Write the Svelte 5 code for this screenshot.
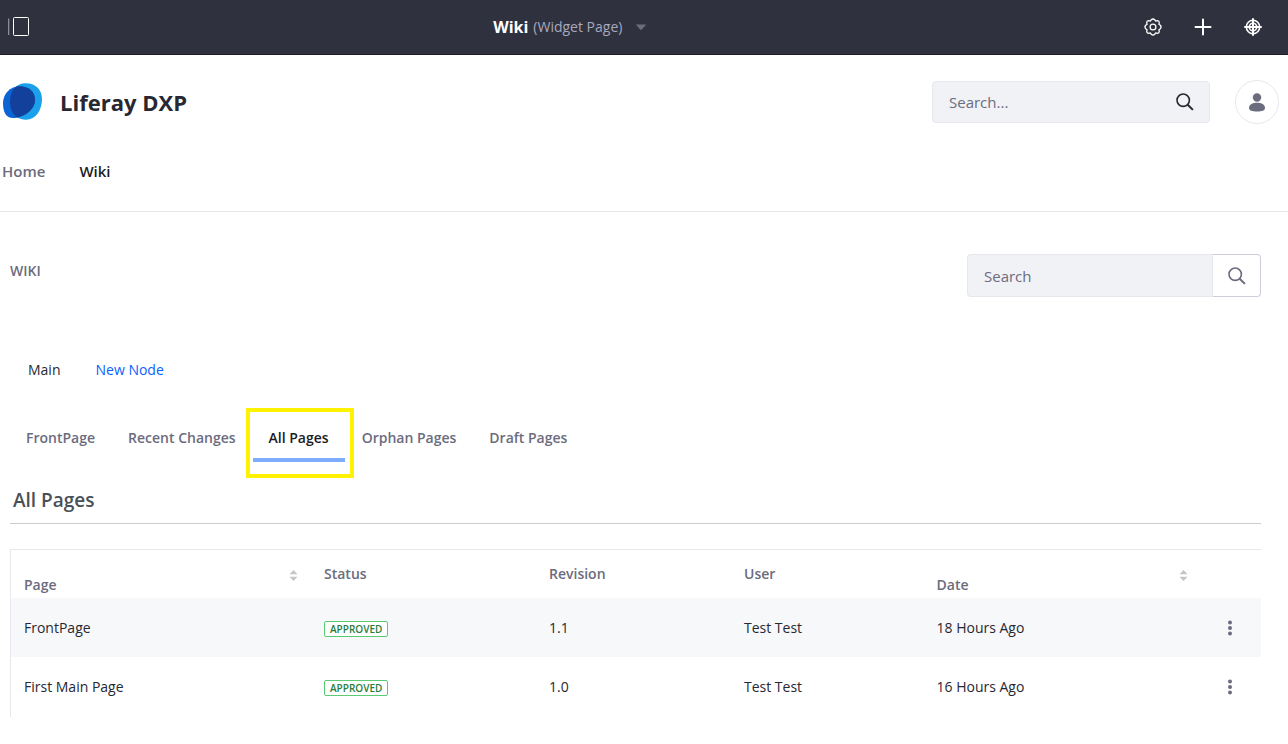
<script>
  const tabs = ['FrontPage', 'Recent Changes', 'All Pages', 'Orphan Pages', 'Draft Pages'];
  const columns = [
    { name: 'Page', sortable: true },
    { name: 'Status' },
    { name: 'Revision' },
    { name: 'User' },
    { name: 'Date', sortable: true }
  ];
  const rows = [
    { page: 'FrontPage', status: 'Approved', revision: '1.1', user: 'Test Test', date: '18 Hours Ago' },
    { page: 'First Main Page', status: 'Approved', revision: '1.0', user: 'Test Test', date: '16 Hours Ago' }
  ];
  let active = $state('All Pages');
</script>

{#snippet magnifier()}
  <svg width="18" height="18" viewBox="0 0 18 18" fill="none" stroke="currentColor" stroke-width="1.6" aria-hidden="true">
    <circle cx="7.2" cy="7.2" r="6.2" />
    <path d="M11.7 11.7L16.9 16.9" stroke-width="2" />
  </svg>
{/snippet}

<header class="control-bar">
  <button class="icon-btn panel-btn" aria-label="Toggle menu">
    <svg width="22" height="20" viewBox="0 0 22 20" fill="none">
      <path d="M0.500 1.5V18" stroke="#8b8c99" stroke-width="1.6" />
      <rect x="5.5" y="0.5" width="15" height="18" rx="1" stroke="#fff" />
    </svg>
  </button>
  <button class="page-title">
    <strong>Wiki</strong>
    <span>(Widget Page)</span>
    <svg width="12" height="7" viewBox="0 0 12 7" aria-hidden="true"><path d="M0.8 0.5h10.4L6.8 5.6q-.8.8-1.6 0z" fill="#6b6c7e" /></svg>
  </button>
  <div class="bar-tools">
    <button class="icon-btn" aria-label="Settings">
      <svg width="18" height="18" viewBox="0 0 18 18" fill="none" stroke="#fff" stroke-width="1.3" stroke-linejoin="round">
        <path d="M7.300 1.700Q9 .2 10.700 1.700L11.700 3.100L13.500 2.700Q15.200 2.800 15.300 4.500L14.900 6.300L16.300 7.300Q17.800 9 16.300 10.700L14.900 11.700L15.300 13.500Q15.200 15.200 13.500 15.300L11.700 14.900L10.700 16.300Q9 17.800 7.300 16.300L6.300 14.900L4.500 15.300Q2.800 15.200 2.700 13.500L3.100 11.700L1.700 10.700Q.2 9 1.700 7.300L3.100 6.300L2.700 4.500Q2.800 2.800 4.500 2.700L6.300 3.100Z" />
        <circle cx="9" cy="9" r="2.9" />
      </svg>
    </button>
    <button class="icon-btn" aria-label="Add">
      <svg width="18" height="18" viewBox="0 0 18 18" stroke="#fff" stroke-width="2" stroke-linecap="round"><path d="M9 1.5V16.500M1.500 9H16.500" /></svg>
    </button>
    <button class="icon-btn" aria-label="Simulation">
      <svg width="18" height="18" viewBox="0 0 18 18" fill="none" stroke="#fff">
        <circle cx="9" cy="9" r="6.7" stroke-width="1.6" />
        <circle cx="9" cy="9" r="3.7" stroke-width="1.6" />
        <path d="M9 1V17M1 9H17" stroke-width="2" stroke-linecap="round" />
      </svg>
    </button>
  </div>
</header>

<div class="banner">
  <div class="brand-row">
    <a class="brand" href="#home">
      <svg width="40" height="38" viewBox="0 0 40 38" aria-hidden="true">
        <defs>
          <clipPath id="front"><path d="M8 19C8 7 15 .5 23 .3C33 0 40 6 40 16C40 27 34 36.500 24 36.700C14 37 8 29 8 19Z" /></clipPath>
        </defs>
        <path d="M8 19C8 7 15 .5 23 .3C33 0 40 6 40 16C40 27 34 36.500 24 36.700C14 37 8 29 8 19Z" fill="#1ba1ec" />
        <path d="M1 20C1 11 8 3.500 17 3.200C26 3 33 8 33 17C33 27 21 35 11 35C4 35 1 29 1 20Z" fill="#0b63d4" />
        <path d="M1 20C1 11 8 3.500 17 3.200C26 3 33 8 33 17C33 27 21 35 11 35C4 35 1 29 1 20Z" fill="#13409a" clip-path="url(#front)" />
      </svg>
      <span>Liferay DXP</span>
    </a>
    <div class="account">
      <form class="site-search" role="search">
        <input type="text" placeholder="Search..." aria-label="Search site" />
        <button type="button" aria-label="Submit site search">{@render magnifier()}</button>
      </form>
      <button class="avatar" aria-label="User profile">
        <svg width="18" height="20" viewBox="0 0 18 20" fill="#6b6c7e">
          <circle cx="9" cy="5.500" r="4.200" />
          <path d="M1 16C1 12.500 4.500 10.800 9 10.800s8 1.700 8 5.200C17 18.500 14 19.500 9 19.500s-8-1-8-3.500z" />
        </svg>
      </button>
    </div>
  </div>
  <nav class="site-nav" aria-label="Site">
    <a href="#home">Home</a>
    <a class="current" href="#wiki" aria-current="page">Wiki</a>
  </nav>
</div>

<main>
  <div class="portlet-head">
    <h2>WIKI</h2>
    <form class="wiki-search" role="search">
      <input type="text" placeholder="Search" aria-label="Search wiki" />
      <button type="button" aria-label="Submit wiki search">{@render magnifier()}</button>
    </form>
  </div>

  <nav class="nodes" aria-label="Nodes">
    <a class="current" href="#main">Main</a>
    <a href="#new-node">New Node</a>
  </nav>

  <div class="tabs" role="tablist">
    {#each tabs as tab}
      <button role="tab" aria-selected={active === tab} class:active={active === tab} onclick={() => (active = tab)}>{tab}</button>
    {/each}
  </div>

  <h1>All Pages</h1>

  <table>
    <colgroup>
      <col class="c-page" /><col class="c-status" /><col class="c-revision" /><col class="c-user" /><col class="c-date" /><col />
    </colgroup>
    <thead>
      <tr>
        {#each columns as column}
          <th scope="col" class:sortable={column.sortable}>
            <div class="th-inner">
              <span>{column.name}</span>
              {#if column.sortable}
                <button class="sort" aria-label="Sort by {column.name}">
                  <svg width="9" height="11" viewBox="0 0 9 11" fill="#c5c5c9"><path d="M4.500 0L8.500 4.300H.5zM.5 6.700h8L4.500 11z" /></svg>
                </button>
              {/if}
            </div>
          </th>
        {/each}
        <td></td>
      </tr>
    </thead>
    <tbody>
      {#each rows as row}
        <tr>
          <td>{row.page}</td>
          <td><span class="label">{row.status}</span></td>
          <td>{row.revision}</td>
          <td>{row.user}</td>
          <td>{row.date}</td>
          <td class="actions">
            <button class="icon-btn" aria-label="Actions for {row.page}">
              <svg width="4" height="16" viewBox="0 0 4 16" fill="#6b6c7e"><circle cx="2" cy="2.500" r="2" /><circle cx="2" cy="8" r="2" /><circle cx="2" cy="13.500" r="2" /></svg>
            </button>
          </td>
        </tr>
      {/each}
    </tbody>
  </table>
</main>

<style>
  :global(body) {
    background: #fff;
    color: #272833;
    font-family: "Open Sans", "Noto Sans", sans-serif;
    font-size: 14px;
    line-height: 20px;
  }
  button, input { font: inherit; color: inherit; }
  button { background: none; border: 0; padding: 0; cursor: pointer; }
  a { color: inherit; text-decoration: none; }
  svg { display: block; }
  .icon-btn { display: grid; place-items: center; }

  .control-bar {
    display: grid;
    grid-template-columns: 15fr auto 19fr;
    align-items: center;
    height: 54px;
    padding: 0 26px 0 8px;
    background: #30313f;
    border-bottom: 1px solid #1c1d29;
  }
  .panel-btn { justify-self: start; }
  .page-title { display: flex; align-items: center; gap: 5px; color: #a7a9bc; }
  .page-title strong { color: #fff; font-size: 16px; }
  .page-title svg { margin-left: 8px; }
  .bar-tools { display: flex; justify-content: flex-end; gap: 32px; }

  .banner { border-bottom: 1px solid #e7e7ed; padding: 25px 9px 30px 2px; }
  .brand-row { display: flex; justify-content: space-between; align-items: center; }
  .brand { display: flex; align-items: center; gap: 18px; font-size: 22px; line-height: 32px; font-weight: 700; }
  .account { display: flex; align-items: center; gap: 25px; }
  .site-search {
    display: flex;
    align-items: center;
    width: 278px;
    height: 42px;
    box-sizing: border-box;
    padding: 0 15px 0 16px;
    background: #f1f2f5;
    border: 1px solid #e7e7ed;
    border-radius: 4px;
  }
  input { flex: 1; min-width: 0; border: 0; padding: 0; background: none; outline: 0; font-size: 15px; }
  input::placeholder { color: #6b6c7e; opacity: 1; }
  .avatar {
    display: grid;
    place-items: center;
    width: 44px;
    height: 44px;
    border: 1px solid #e7e7ed;
    border-radius: 50%;
  }
  .site-nav { display: flex; gap: 34px; margin-top: 37px; font-size: 15px; font-weight: 600; color: #6b6c7e; }
  .site-nav .current { color: #1c1c24; }

  main { padding: 42px 27px 27px 10px; }
  .portlet-head { display: flex; justify-content: space-between; align-items: flex-start; }
  h2 { margin: 7px 0 0; font-size: 14px; font-weight: 600; line-height: 20px; color: #6b6c7e; }
  .wiki-search {
    display: flex;
    width: 294px;
    height: 43px;
  }
  .wiki-search input {
    padding: 0 16px;
    background: #f1f2f5;
    border: 1px solid #e7e7ed;
    border-right: 0;
    border-radius: 4px 0 0 4px;
  }
  .wiki-search button {
    display: grid;
    place-items: center;
    width: 49px;
    color: #6b6c7e;
    border: 1px solid #cdced9;
    border-left-color: #e7e7ed;
    border-radius: 0 4px 4px 0;
  }

  .nodes { display: flex; gap: 35px; margin: 63px 0 0 18px; color: #0b5fff; }
  .nodes .current { color: #272833; }

  .tabs { display: flex; gap: 1px; margin-top: 34px; }
  .tabs button {
    position: relative;
    height: 48px;
    padding: 0 16px;
    font-weight: 600;
    color: #6b6c7e;
    white-space: nowrap;
  }
  .tabs .active { color: #1c1c24; box-shadow: inset 0 -4px #80acff; }
  .tabs .active::after {
    content: "";
    position: absolute;
    inset: -6px -9px -16px -7px;
    border: 4px solid #fff200;
    pointer-events: none;
  }

  h1 {
    margin: 23px 0 25px;
    padding: 0 3px 8px;
    border-bottom: 1px solid #ccc;
    color: #495057;
    font-size: 19px;
    font-weight: 600;
    line-height: 30px;
  }

  table {
    width: 100%;
    table-layout: fixed;
    border-collapse: separate;
    border-spacing: 0;
    border: 1px solid #e7e7ed;
    border-width: 1px 0 0 1px;
  }
  .c-page { width: 24%; }
  .c-status { width: 18%; }
  .c-revision { width: 15.6%; }
  .c-user { width: 15.4%; }
  .c-date { width: 22.2%; }
  th, td { padding: 0 13px; text-align: left; }
  th { height: 48px; padding: 14px 13px 0; box-sizing: border-box; vertical-align: top; color: #6b6c7e; font-weight: 600; }
  .th-inner { display: flex; justify-content: space-between; }
  .sortable span { padding-top: 11px; }
  .sort { display: grid; place-items: center; width: 9px; height: 22px; }
  tbody td { height: 60px; }
  tbody tr:nth-child(odd) td { height: 59px; background: #f7f8f9; }
  .label {
    display: inline-block;
    padding: 0 5px;
    border: 1px solid #5aca75;
    border-radius: 2px;
    background: #fff;
    color: #287d3c;
    font-size: 10px;
    font-weight: 600;
    line-height: 14px;
    text-transform: uppercase;
    vertical-align: middle;
  }
  .actions .icon-btn { width: 32px; height: 32px; }
</style>
